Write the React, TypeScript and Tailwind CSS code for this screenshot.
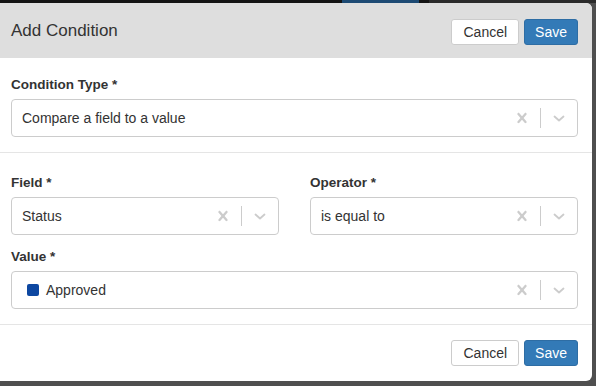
import React, { JSX } from "react";

const font = { fontFamily: "'Liberation Sans', Arial, Helvetica, sans-serif" };

const CrossIcon = () => (
  <svg viewBox="0 0 20 20" className="w-[20px] h-[20px] fill-[#cccccc]">
    <path d="M14.348 14.849c-0.469 0.469-1.229 0.469-1.697 0l-2.651-3.030-2.651 3.029c-0.469 0.469-1.229 0.469-1.697 0-0.469-0.469-0.469-1.229 0-1.697l2.758-3.15-2.759-3.152c-0.469-0.469-0.469-1.228 0-1.697s1.228-0.469 1.697 0l2.652 3.031 2.651-3.031c0.469-0.469 1.228-0.469 1.697 0s0.469 1.229 0 1.697l-2.758 3.152 2.758 3.15c0.469 0.469 0.469 1.229 0 1.698z" />
  </svg>
);

const ChevronIcon = () => (
  <svg viewBox="0 0 20 20" className="w-[20px] h-[20px]">
    <path d="M5.5 8.5 L10 12.5 L14.5 8.5" fill="none" stroke="#cccccc" strokeWidth="1.8" strokeLinecap="round" strokeLinejoin="round" />
  </svg>
);

const Select = ({ children }: { children: React.ReactNode }) => (
  <div className="flex items-center h-[38px] border border-[#cccccc] rounded-[4px] bg-white">
    <div className="flex-1 flex items-center gap-[7px] pl-[10px] text-[14px] text-[#333333] truncate">{children}</div>
    <div className="flex items-center h-full">
      <div className="p-[8px] flex items-center"><CrossIcon /></div>
      <div className="w-px h-[20px] bg-[#cccccc]" />
      <div className="p-[8px] flex items-center"><ChevronIcon /></div>
    </div>
  </div>
);

const Label = ({ children }: { children: React.ReactNode }) => (
  <div className="text-[13.5px] leading-[19px] font-bold text-[#333333] mb-[5px]">{children}</div>
);

const Buttons = () => (
  <div className="flex items-center gap-[5px]">
    <button className="h-[26px] px-[11px] text-[14px] text-[#333333] bg-white border border-[#cccccc] rounded-[3px]">Cancel</button>
    <button className="h-[26px] px-[10px] text-[14px] text-white bg-[#337ab7] border border-[#2e6da4] rounded-[3px]">Save</button>
  </div>
);

export default function App(): JSX.Element {
  return (
    <div className="w-[596px] h-[386px] bg-[#4f4f4f] overflow-hidden flex flex-col" style={font}>
      <div className="h-[3px] flex bg-[#141414]">
        <div className="w-[342px]" />
        <div className="w-[77px] bg-[#1d4a73]" />
        <div className="w-[10px]" />
        <div className="flex-1 bg-[#2a2a2a]" />
      </div>
      <div className="w-[592px] h-[378px] bg-white rounded-r-[6px] overflow-hidden flex flex-col">
        <div className="h-[55px] shrink-0 bg-[#dedede] flex items-center justify-between pl-[11px] pr-[14px]">
          <div className="text-[17px] text-[#333333]">Add Condition</div>
          <div className="pt-[3px]"><Buttons /></div>
        </div>
        <div className="px-[11px] pr-[14px] pt-[17px] pb-[15px] border-b border-[#e5e5e5]">
          <Label>Condition Type *</Label>
          <Select>Compare a field to a value</Select>
        </div>
        <div className="px-[11px] pr-[14px] pt-[20px] pb-[15px] border-b border-[#e5e5e5]">
          <div className="grid grid-cols-2 gap-x-[31px]">
            <div>
              <Label>Field *</Label>
              <Select>Status</Select>
            </div>
            <div>
              <Label>Operator *</Label>
              <Select>is equal to</Select>
            </div>
          </div>
          <div className="mt-[12px]">
            <Label>Value *</Label>
            <Select>
              <span className="w-[12px] h-[12px] rounded-[2px] bg-[#0d47a1] ml-[5px]" />
              <span>Approved</span>
            </Select>
          </div>
        </div>
        <div className="flex justify-end pr-[14px] pt-[15px]">
          <Buttons />
        </div>
      </div>
    </div>
  );
}
